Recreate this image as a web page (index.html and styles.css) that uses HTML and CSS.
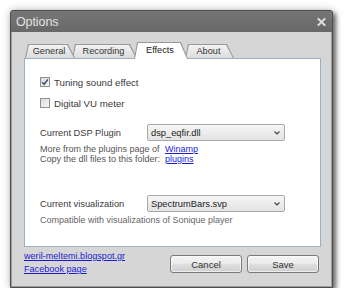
FILE: index.html
```
<!DOCTYPE html>
<html>
<head>
<meta charset="utf-8">
<link rel="stylesheet" href="styles.css">
</head>
<body>
<div class="window">
  <div class="titlebar">
    <span class="title">Options</span>
    <svg class="close" width="9" height="8" viewBox="0 0 9 8"><path d="M1.5 1 L7.5 7 M7.5 1 L1.5 7" stroke="#dcdcdc" stroke-width="2" stroke-linecap="square"/></svg>
  </div>
  <div class="client">
    <div class="tabs">
      <div class="tab t-general"><span>General</span></div>
      <div class="tab t-recording"><span>Recording</span></div>
      <div class="tab t-effects active"><span>Effects</span></div>
      <div class="tab t-about"><span>About</span></div>
    </div>
    <div class="panel">
      <div class="check-row">
        <span class="checkbox checked"><svg width="8" height="8" viewBox="0 0 8 8"><path d="M1.2 4.2 L3.2 6.3 L6.8 1.5" fill="none" stroke="#3d4f70" stroke-width="1.5"/></svg></span>
        <span>Tuning sound effect</span>
      </div>
      <div class="check-row second">
        <span class="checkbox"></span>
        <span>Digital VU meter</span>
      </div>
      <div class="field-row dsp">
        <span class="field-label">Current DSP Plugin</span>
        <div class="select"><span>dsp_eqfir.dll</span><svg width="6" height="4" viewBox="0 0 6 4"><path d="M0.5 0.5 L3 3 L5.5 0.5" fill="none" stroke="#444" stroke-width="1.2"/></svg></div>
      </div>
      <div class="info">
        <span>More from the plugins page of</span><a class="link" href="#">Winamp</a>
        <span>Copy the dll files to this folder:</span><a class="link" href="#">plugins</a>
      </div>
      <div class="field-row vis">
        <span class="field-label">Current visualization</span>
        <div class="select"><span>SpectrumBars.svp</span><svg width="6" height="4" viewBox="0 0 6 4"><path d="M0.5 0.5 L3 3 L5.5 0.5" fill="none" stroke="#444" stroke-width="1.2"/></svg></div>
      </div>
      <div class="note">Compatible with visualizations of Sonique player</div>
    </div>
    <div class="footer">
      <div class="links">
        <a class="link" href="#">weril-meltemi.blogspot.gr</a>
        <a class="link" href="#">Facebook page</a>
      </div>
      <div class="buttons">
        <button class="btn">Cancel</button>
        <button class="btn">Save</button>
      </div>
    </div>
  </div>
</div>
</body>
</html>
```
FILE: styles.css
```
* { box-sizing: border-box; }
html, body { margin: 0; background: #fff; }
body {
  font-family: "Liberation Sans", Arial, sans-serif;
  font-size: 9.3px;
  color: #3a3a3a;
}
.window {
  margin: 10px 0 0 10px;
  width: 323px;
  height: 278px;
  border: 1px solid #4e4e4e;
  border-radius: 3px 3px 0 0;
  background: #6b6b6b;
  box-shadow: 3px 3px 5px rgba(0,0,0,0.55), 0 0 9px rgba(0,0,0,0.25);
  display: flex;
  flex-direction: column;
}
.titlebar {
  height: 21px;
  flex: none;
  display: flex;
  align-items: center;
  justify-content: space-between;
  padding: 0 6px 0 5px;
  background: linear-gradient(#767676, #686868);
  border-radius: 2px 2px 0 0;
}
.title {
  font-size: 12.5px;
  color: #e2e2e2;
  letter-spacing: -0.1px;
}
.close { display: block; }
.client {
  flex: 1;
  background: #d6d6d6;
  border: 1px solid #9c9c9c;
  border-top: none;
  padding: 10px 10px 0 12px;
  display: flex;
  flex-direction: column;
}
.tabs {
  display: flex;
  align-items: flex-end;
  height: 16px;
  padding-left: 1px;
}
.tab {
  position: relative;
  height: 14px;
  margin-left: -3px;
  display: flex;
  align-items: center;
  justify-content: center;
  padding-right: 2px;
  font-size: 9.2px;
  color: #333;
}
.tab::before, .tab::after {
  content: "";
  position: absolute;
  clip-path: polygon(3px 0, calc(100% - 7px) 0, 100% 100%, 0 100%);
}
.tab::before { inset: 0; background: #999; }
.tab::after { inset: 1px 1px 0 1px; background: linear-gradient(#f3f3f3, #dcdcdc); }
.tab span { position: relative; z-index: 1; }
.t-general { margin-left: 0; width: 50px; z-index: 4; }
.t-recording { width: 65px; z-index: 3; }
.t-effects { width: 54px; z-index: 2; }
.t-about { width: 49px; z-index: 1; }
.tab.active {
  z-index: 10;
  height: 17px;
  margin-bottom: -1px;
  padding-bottom: 1px;
  color: #222;
}
.tab.active::after { background: #fff; }
.panel {
  height: 189px;
  flex: none;
  border: 1px solid #9ab0c7;
  background: #fff;
  padding: 17px 0 0 15px;
}
.check-row {
  display: flex;
  align-items: center;
  height: 12px;
  gap: 4px;
  font-size: 9.7px;
}
.check-row.second { margin-top: 9px; }
.checkbox {
  width: 10px;
  height: 10px;
  border: 1px solid #8e8f8f;
  background: linear-gradient(135deg, #dcdcdc, #f6f6f6);
  display: flex;
  align-items: center;
  justify-content: center;
}
.field-row {
  display: flex;
  align-items: center;
  height: 17px;
}
.field-row.dsp { margin-top: 15px; }
.field-row.vis { margin-top: 31px; }
.field-label { width: 107px; color: #3a3a3a; }
.select {
  width: 138px;
  height: 17px;
  border: 1px solid #a9a9a9;
  border-radius: 2px;
  background: linear-gradient(#f6f6f6, #e3e3e3);
  display: flex;
  align-items: center;
  justify-content: space-between;
  padding: 0 4px 0 3px;
  color: #222;
}
.info {
  margin-top: 3px;
  display: grid;
  grid-template-columns: 125px auto;
  justify-content: start;
  line-height: 10px;
  font-size: 9px;
  white-space: nowrap;
  color: #555;
}
.link { color: #1b1bd6; text-decoration: underline; }
.note {
  margin-top: 3px;
  line-height: 10px;
  font-size: 9px;
  color: #666;
}
.footer {
  display: flex;
  justify-content: space-between;
  align-items: flex-start;
  padding-right: 2px;
}
.links {
  margin-top: 3px;
  display: flex;
  flex-direction: column;
  line-height: 13px;
  font-size: 9.1px;
}
.buttons {
  margin-top: 8px;
  display: flex;
  gap: 5px;
}
.btn {
  width: 72px;
  height: 18px;
  border: 1px solid #7a7a7a;
  border-radius: 3px;
  background: linear-gradient(#f4f4f4 0%, #ececec 45%, #dcdcdc 55%, #d0d0d0 100%);
  font-family: "Liberation Sans", Arial, sans-serif;
  font-size: 9.5px;
  color: #333;
  padding: 0;
  box-shadow: inset 0 0 0 1px rgba(255,255,255,0.6);
}
```
